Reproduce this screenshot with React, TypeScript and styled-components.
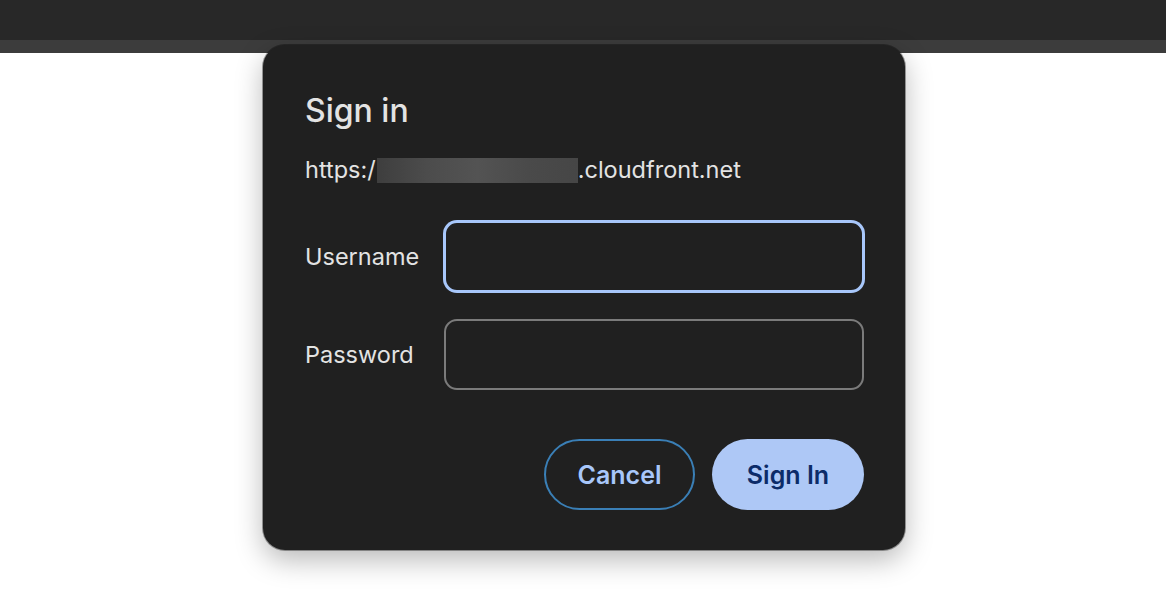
import React from "react";
import styled, { createGlobalStyle } from "styled-components";

const Global = createGlobalStyle`
  html, body { margin: 0; padding: 0; background: #ffffff; }
  body { font-family: Inter, "Noto Sans", "Liberation Sans", sans-serif; }
  * { box-sizing: border-box; }
`;

const Page = styled.div`
  position: relative;
  width: 1166px;
  height: 598px;
  overflow: hidden;
  background: #ffffff;
`;

const TitleBar = styled.div`
  height: 40px;
  background: #282828;
`;

const TabStrip = styled.div`
  height: 13px;
  background: #3c3c3c;
`;

const Dialog = styled.div`
  position: absolute;
  left: 263px;
  top: 45px;
  width: 642px;
  height: 505px;
  background: #202020;
  border-radius: 22px;
  box-shadow: 0 10px 28px rgba(0, 0, 0, 0.28), 0 0 0 1px rgba(0, 0, 0, 0.35);
  padding: 47px 41px 0 42px;
  display: flex;
  flex-direction: column;
  color: #e3e3e3;
`;

const Title = styled.h1`
  margin: 0;
  font-size: 32px;
  line-height: 38px;
  font-weight: 500;
  color: #e3e3e3;
`;

const Origin = styled.div`
  margin-top: 26px;
  font-size: 23.5px;
  line-height: 28px;
  display: flex;
  align-items: center;
  white-space: nowrap;
`;

const Redacted = styled.span`
  display: inline-block;
  width: 201px;
  height: 25px;
  margin-left: 1px;
  margin-right: 0;
  background: linear-gradient(
    90deg,
    #3e3e3e 0%,
    #4c4c4c 25%,
    #535353 50%,
    #4a4a4a 75%,
    #464646 100%
  );
  filter: blur(0.6px);
`;

const Form = styled.div`
  margin-top: 37px;
  display: grid;
  grid-template-columns: 139px 420px;
  row-gap: 27px;
  align-items: center;
`;

const Label = styled.label`
  font-size: 23.5px;
  line-height: 28px;
  color: #e3e3e3;
`;

const Field = styled.div<{ $focused?: boolean }>`
  height: 71px;
  border-radius: 13px;
  border: 2px solid ${(p) => (p.$focused ? "#a8c7fa" : "#7b7b7b")};
  box-shadow: ${(p) => (p.$focused ? "0 0 0 1px #a8c7fa" : "none")};
  background: #202020;
`;

const Actions = styled.div`
  margin-top: 49px;
  display: flex;
  justify-content: flex-end;
  gap: 17px;
`;

const Button = styled.button<{ $primary?: boolean }>`
  height: 71px;
  width: ${(p) => (p.$primary ? "152px" : "151px")};
  border-radius: 36px;
  font-family: Inter, "Noto Sans", "Liberation Sans", sans-serif;
  font-size: 25px;
  font-weight: 600;
  cursor: pointer;
  border: ${(p) => (p.$primary ? "none" : "2px solid #3a7fb6")};
  background: ${(p) => (p.$primary ? "#aec8f6" : "transparent")};
  color: ${(p) => (p.$primary ? "#0c2b68" : "#a8c7fa")};
  padding: 0;
`;

export default function App() {
  return (
    <Page>
      <Global />
      <TitleBar />
      <TabStrip />
      <Dialog role="dialog">
        <Title>Sign in</Title>
        <Origin>
          https:/<Redacted />.cloudfront.net
        </Origin>
        <Form>
          <Label>Username</Label>
          <Field $focused />
          <Label>Password</Label>
          <Field />
        </Form>
        <Actions>
          <Button>Cancel</Button>
          <Button $primary>Sign In</Button>
        </Actions>
      </Dialog>
    </Page>
  );
}
